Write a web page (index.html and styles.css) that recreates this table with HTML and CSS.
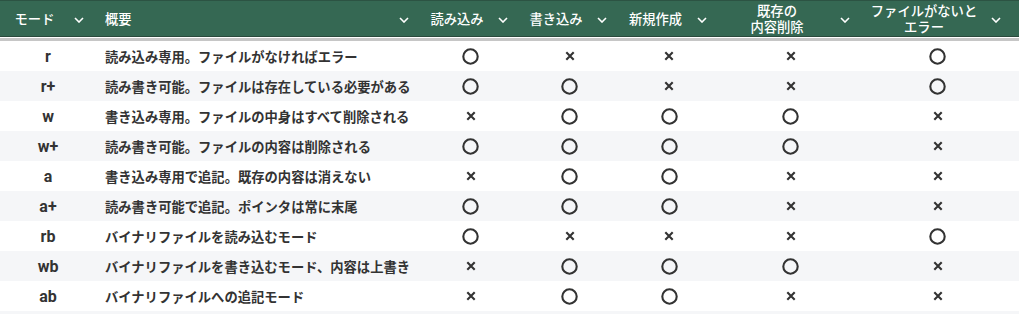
FILE: index.html
```html
<!DOCTYPE html>
<html lang="ja">
<head>
<meta charset="utf-8">
<link rel="stylesheet" href="styles.css">
</head>
<body>
<div class="table">
  <div class="head">
    <div class="hc c-mode"><span class="lbl center">モード</span><span class="chev"><svg width="10" height="6" viewBox="0 0 10 6"><path d="M1 1l4 4 4-4" fill="none" stroke="#fff" stroke-width="1.6"/></svg></span></div>
    <div class="hc c-desc"><span class="lbl left">概要</span><span class="chev"><svg width="10" height="6" viewBox="0 0 10 6"><path d="M1 1l4 4 4-4" fill="none" stroke="#fff" stroke-width="1.6"/></svg></span></div>
    <div class="hc"><span class="lbl center">読み込み</span><span class="chev"><svg width="10" height="6" viewBox="0 0 10 6"><path d="M1 1l4 4 4-4" fill="none" stroke="#fff" stroke-width="1.6"/></svg></span></div>
    <div class="hc"><span class="lbl center">書き込み</span><span class="chev"><svg width="10" height="6" viewBox="0 0 10 6"><path d="M1 1l4 4 4-4" fill="none" stroke="#fff" stroke-width="1.6"/></svg></span></div>
    <div class="hc"><span class="lbl center">新規作成</span><span class="chev"><svg width="10" height="6" viewBox="0 0 10 6"><path d="M1 1l4 4 4-4" fill="none" stroke="#fff" stroke-width="1.6"/></svg></span></div>
    <div class="hc"><span class="lbl center two"><span class="ln">既存の</span><span class="ln">内容削除</span></span><span class="chev"><svg width="10" height="6" viewBox="0 0 10 6"><path d="M1 1l4 4 4-4" fill="none" stroke="#fff" stroke-width="1.6"/></svg></span></div>
    <div class="hc"><span class="lbl center two"><span class="ln">ファイルがないと</span><span class="ln">エラー</span></span><span class="chev"><svg width="10" height="6" viewBox="0 0 10 6"><path d="M1 1l4 4 4-4" fill="none" stroke="#fff" stroke-width="1.6"/></svg></span></div>
  </div>
  <div class="sep"></div>
  <div class="body" id="body"></div>
</div>
<template id="o"><svg class="ic" width="17" height="17" viewBox="0 0 17 17"><circle cx="8.5" cy="8.5" r="7.2" fill="none" stroke="#333" stroke-width="2.1"/></svg></template>
<template id="x"><svg class="ic" width="10" height="10" viewBox="0 0 10 10"><path d="M1.3 1.3l7.4 7.4M8.7 1.3l-7.4 7.4" stroke="#333" stroke-width="2.1" stroke-linecap="butt"/></svg></template>
<script src="app.js"></script>
</body>
</html>
```

FILE: app.js
```js
const rows = [
  ["r", "読み込み専用。ファイルがなければエラー", "oxxxo"],
  ["r+", "読み書き可能。ファイルは存在している必要がある", "ooxxo"],
  ["w", "書き込み専用。ファイルの中身はすべて削除される", "xooox"],
  ["w+", "読み書き可能。ファイルの内容は削除される", "oooox"],
  ["a", "書き込み専用で追記。既存の内容は消えない", "xooxx"],
  ["a+", "読み書き可能で追記。ポインタは常に末尾", "oooxx"],
  ["rb", "バイナリファイルを読み込むモード", "oxxxo"],
  ["wb", "バイナリファイルを書き込むモード、内容は上書き", "xooox"],
  ["ab", "バイナリファイルへの追記モード", "xooxx"],
  ["", "", ""]
];
const body = document.getElementById("body");
const tpl = { o: document.getElementById("o"), x: document.getElementById("x") };
rows.forEach((r) => {
  const row = document.createElement("div");
  row.className = "row";
  const m = document.createElement("div");
  m.className = "cell c-mode mode";
  m.textContent = r[0];
  row.appendChild(m);
  const d = document.createElement("div");
  d.className = "cell c-desc desc";
  d.textContent = r[1];
  row.appendChild(d);
  for (let i = 0; i < 5; i++) {
    const c = document.createElement("div");
    c.className = "cell mark";
    const k = r[2][i];
    if (k) c.appendChild(tpl[k].content.cloneNode(true));
    row.appendChild(c);
  }
  body.appendChild(row);
});
```

FILE: styles.css
```css
* { box-sizing: border-box; }
html, body { margin: 0; padding: 0; background: #fff; }
body {
  font-family: Roboto, "Noto Sans CJK JP", sans-serif;
  color: #333;
  overflow: hidden;
}
.table { width: 1019px; }
.head, .row {
  display: grid;
  grid-template-columns: 96px 325px 99px 99px 100px 143px 151px 6px;
}
.head {
  height: 37px;
  background: #356853;
  border-top: 1px solid #2c5343;
  border-bottom: 1px solid #2a4a3c;
  color: #fff;
  font-family: "Noto Sans CJK JP", sans-serif;
  font-size: 13.3px;
  font-weight: 500;
  line-height: 16px;
}
.hc {
  display: flex;
  align-items: center;
  padding-right: 7px;
}
.lbl { flex: 1; }
.lbl.center { text-align: center; }
.lbl.left { padding-left: 9px; }
.lbl.two {
  display: flex;
  flex-direction: column;
  align-items: center;
}
.ln { display: block; height: 16px; line-height: 16px; }
.chev {
  width: 20px;
  display: flex;
  justify-content: center;
  align-items: center;
  padding-top: 2px;
}
.sep {
  height: 4px;
  border-top: 1px solid #fff;
  background: #c6c6c6;
}
.row { height: 30px; }
.row:nth-child(even) { background: #f5f6f8; }
.cell {
  display: flex;
  align-items: center;
}
.mode {
  justify-content: center;
  font-family: Roboto, sans-serif;
  font-weight: 700;
  font-size: 16px;
  color: #333;
}
.desc {
  padding-left: 9px;
  font-family: "Noto Sans CJK JP", sans-serif;
  font-weight: 700;
  font-size: 13.3px;
  color: #333;
  white-space: nowrap;
}
.mark { justify-content: center; }
.ic { display: block; }
```
